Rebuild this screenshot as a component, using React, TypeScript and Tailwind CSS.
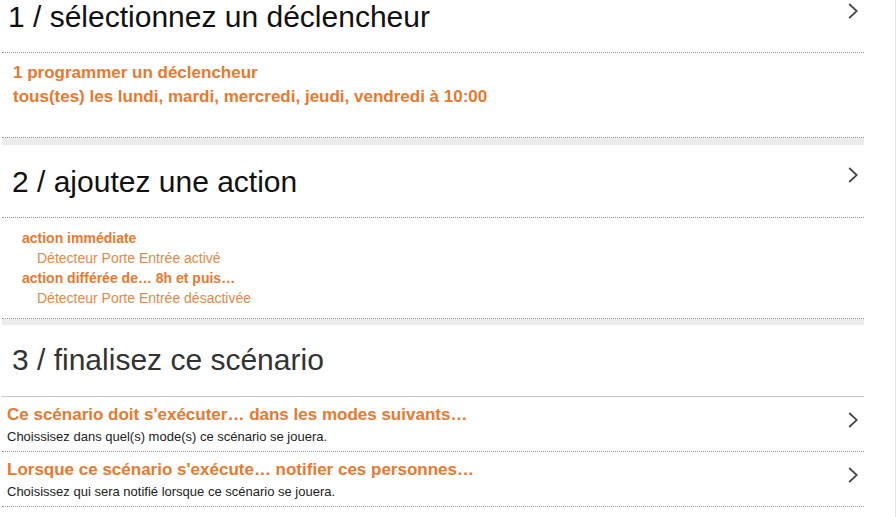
import React from 'react';

const font = { fontFamily: '"Liberation Sans", Arial, sans-serif' };

function Chevron() {
  return (
    <svg width="10" height="16" viewBox="0 0 10 16" className="shrink-0">
      <polyline points="1.2,1 8.8,8 1.2,15" fill="none" stroke="#454545" strokeWidth="1.7" />
    </svg>
  );
}

function Row({ title, hint }: { title: string; hint: string }) {
  return (
    <div className="flex items-start justify-between border-b border-dotted border-[#9a9a9a] pl-[5px] pr-[6px] pt-[8px] pb-[6px]">
      <div>
        <div className="text-[17px] font-bold leading-[20px] text-[#e8792e]">{title}</div>
        <div className="mt-[4px] text-[13px] leading-[16px] text-[#222]">{hint}</div>
      </div>
      <div className="pt-[7px]">
        <Chevron />
      </div>
    </div>
  );
}

export default function App() {
  return (
    <div className="h-[517px] w-[896px] overflow-hidden border-r border-[#e6e6e6] bg-white" style={font}>
      <div className="ml-[2px] flex w-[862px] flex-col bg-[#ececec]">
        {/* step 1 */}
        <section className="bg-white">
          <div className="flex items-start justify-between border-b border-dotted border-[#9a9a9a] pl-[6px] pr-[6px] pt-[1px] pb-[19px]">
            <h1 className="text-[30px] leading-[32px] text-[#111]">1 / sélectionnez un déclencheur</h1>
            <div className="pt-[2px]">
              <Chevron />
            </div>
          </div>
          <div className="border-b border-dotted border-[#9a9a9a] pl-[11px] pt-[8px] pb-[28px] text-[17px] font-bold leading-[24px] text-[#e8792e]">
            <div>1 programmer un déclencheur</div>
            <div>tous(tes) les lundi, mardi, mercredi, jeudi, vendredi à 10:00</div>
          </div>
        </section>

        {/* step 2 */}
        <section className="mt-[7px] bg-white">
          <div className="flex items-start justify-between border-b border-dotted border-[#9a9a9a] pl-[10px] pr-[6px] pt-[21px] pb-[19px]">
            <h1 className="text-[30px] leading-[32px] text-[#111]">2 / ajoutez une action</h1>
            <div className="pt-[1px]">
              <Chevron />
            </div>
          </div>
          <div className="border-b border-dotted border-[#9a9a9a] pl-[20px] pt-[10px] pb-[10px] text-[14px] leading-[20px]">
            <div className="font-bold text-[#e8792e]">action immédiate</div>
            <div className="pl-[15px] text-[#e38848]">Détecteur Porte Entrée activé</div>
            <div className="font-bold text-[#e8792e]">action différée de… 8h et puis…</div>
            <div className="pl-[15px] text-[#e38848]">Détecteur Porte Entrée désactivée</div>
          </div>
        </section>

        {/* step 3 */}
        <section className="mt-[6px] bg-white">
          <div className="border-b border-[#c8c8c8] pl-[10px] pt-[19px] pb-[20px]">
            <h1 className="text-[30px] leading-[32px] text-[#333]">3 / finalisez ce scénario</h1>
          </div>
          <Row
            title="Ce scénario doit s'exécuter… dans les modes suivants…"
            hint="Choissisez dans quel(s) mode(s) ce scénario se jouera."
          />
          <Row
            title="Lorsque ce scénario s'exécute… notifier ces personnes…"
            hint="Choisissez qui sera notifié lorsque ce scénario se jouera."
          />
          <div className="h-[40px]" />
        </section>
      </div>
    </div>
  );
}
